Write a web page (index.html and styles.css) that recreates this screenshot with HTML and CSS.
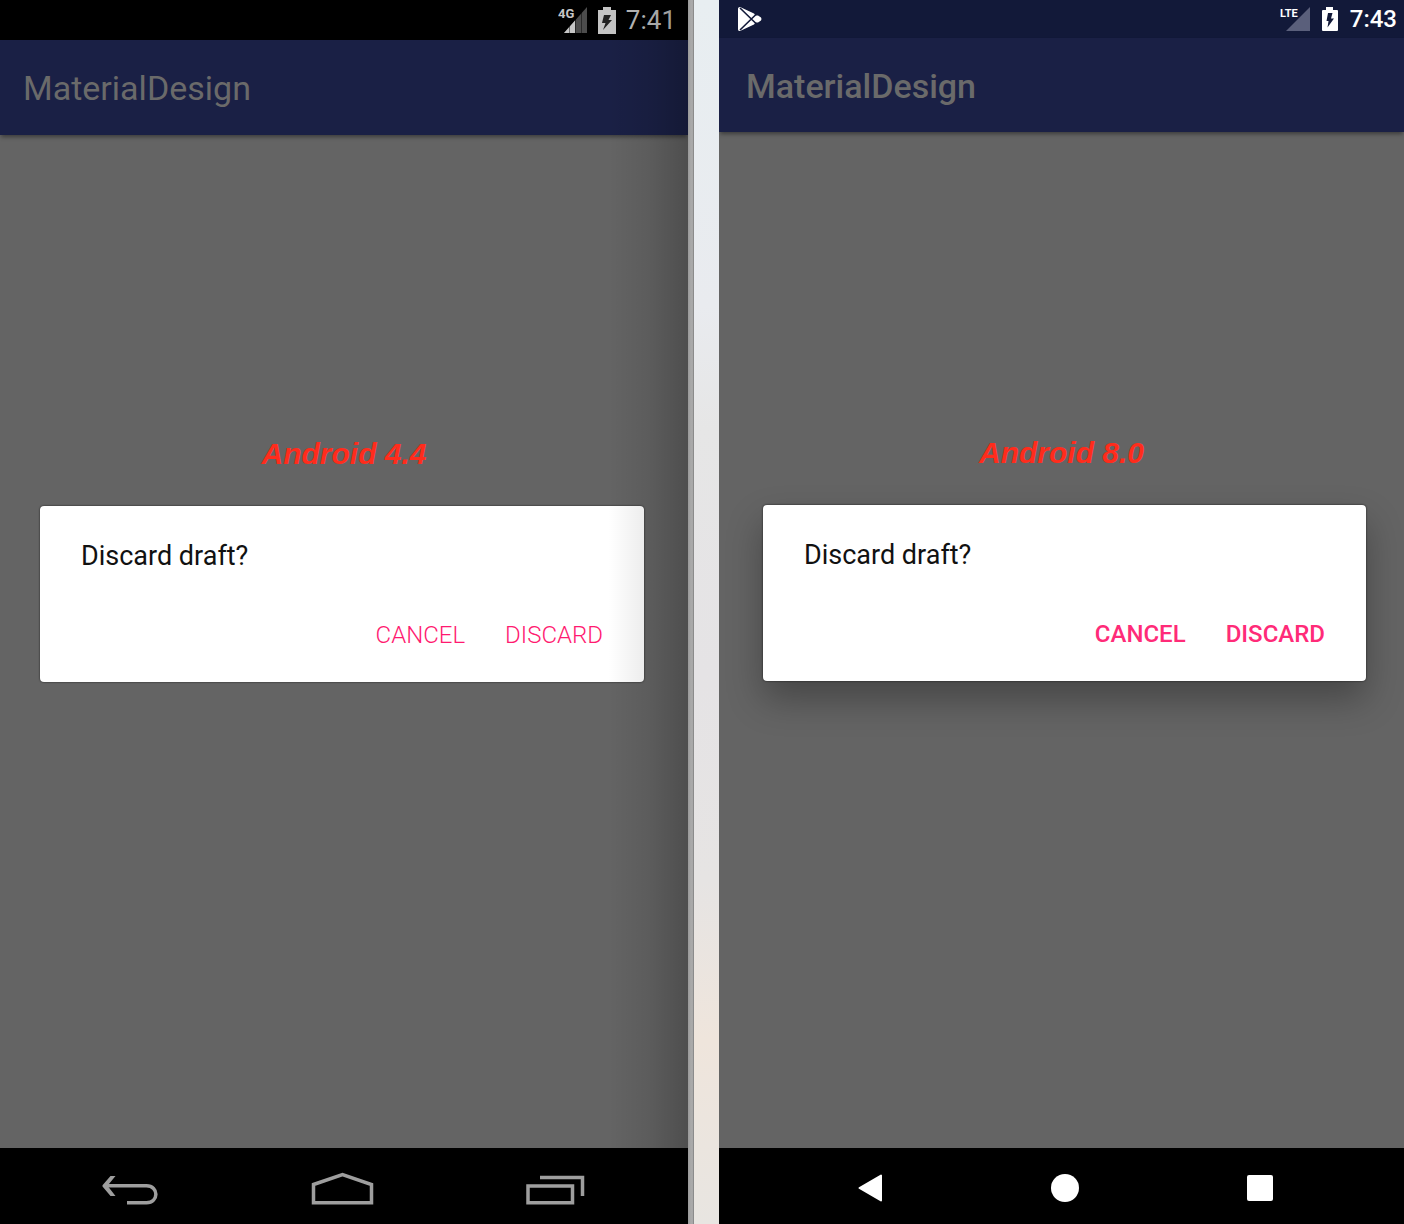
FILE: index.html
```html
<!DOCTYPE html>
<html lang="en">
<head>
<meta charset="utf-8">
<meta name="viewport" content="width=device-width, initial-scale=1">
<title>MaterialDesign</title>
<link rel="stylesheet" href="styles.css">
</head>
<body>
<main class="comparison">
  <section class="phone phone-kitkat">
    <div class="status-bar">
      <svg class="signal" width="30" height="28" viewBox="0 0 30 28" aria-label="4G signal">
        <path d="M6 27 29 1V27Z" fill="#4c4c4c"/>
        <path d="M6 27 17 14.500V27Z" fill="#c6c6c6"/>
        <path d="M11.500 19V27M17.500 12V27M23.500 6V27" stroke="#000" stroke-opacity=".45"/>
        <text class="network" x="0" y="12">4G</text>
      </svg>
      <svg class="battery" width="18" height="27" viewBox="0 0 18 27" aria-label="Battery charging">
        <path d="M5 0H13V3H18V27H0V3H5Z" fill="#c4c4c4"/>
        <path d="M6 8H13L10.500 13H14L5 23 7.500 16H4Z" fill="#222"/>
      </svg>
      <span class="clock">7:41</span>
    </div>
    <header class="app-bar"><h1 class="app-title">MaterialDesign</h1></header>
    <div class="screen">
      <p class="version">Android 4.4</p>
      <div class="dialog" role="dialog" aria-labelledby="title-kitkat">
        <h2 class="dialog-title" id="title-kitkat">Discard draft?</h2>
        <div class="actions">
          <button class="action" type="button">CANCEL</button>
          <button class="action" type="button">DISCARD</button>
        </div>
      </div>
    </div>
    <nav class="nav-bar">
      <button class="nav-button" type="button" aria-label="Back">
        <svg width="64" height="36" viewBox="0 0 64 36" fill="none" stroke="#9e9e9e" stroke-width="3.500">
          <path d="M7 15.800H48.500C61 15.800 61 32.800 48.500 32.800H29"/>
          <path d="M12.500 6H17.500L9.500 15.800 17.500 26H12.500L4.500 16.500V15.200Z" fill="#9e9e9e" stroke="none"/>
        </svg>
      </button>
      <button class="nav-button" type="button" aria-label="Home">
        <svg width="64" height="36" viewBox="0 0 64 36" fill="none" stroke="#9e9e9e" stroke-width="3.500">
          <path d="M2.500 14.500 31.500 4.500 60.500 14.500V32.800H2.500Z"/>
        </svg>
      </button>
      <button class="nav-button" type="button" aria-label="Recent apps">
        <svg width="64" height="36" viewBox="0 0 64 36" fill="none" stroke="#9e9e9e" stroke-width="3.500">
          <path d="M4 16H48.500V32.800H4Z"/>
          <path d="M16 7.500H58.500V26"/>
        </svg>
      </button>
    </nav>
  </section>
  <div class="bezel"></div>
  <div class="backdrop"></div>
  <section class="phone phone-oreo">
    <div class="status-bar">
      <svg class="play" width="24" height="24" viewBox="0 0 24 24" aria-label="Play Store">
        <path d="M0 1.500Q0 0 2 0L16 6.500 17.500 8.500H20L23 10.500Q24 12 23 13.500L20 15.500H17.500L16 17.500 2 24Q0 24 0 22.500Z" fill="#fff"/>
        <path d="M2 1 18.500 17M2 23 18.500 7" stroke="#121939" stroke-width="1.600" fill="none"/>
      </svg>
      <svg class="signal" width="30" height="26" viewBox="0 0 30 26" aria-label="LTE signal">
        <path d="M6 25 30 1V25Z" fill="#5a5f7b"/>
        <text class="network" x="0" y="11">LTE</text>
      </svg>
      <svg class="battery" width="16" height="24" viewBox="0 0 16 24" aria-label="Battery charging">
        <path d="M4 0H11V3H15Q16 3 16 4V23Q16 24 15 24H1Q0 24 0 23V4Q0 3 1 3H4Z" fill="#fff"/>
        <path d="M6 6H10.500L9 11.500H12L5.500 20.500 6.500 14H4.500Z" fill="#121939"/>
      </svg>
      <span class="clock">7:43</span>
    </div>
    <header class="app-bar"><h1 class="app-title">MaterialDesign</h1></header>
    <div class="screen">
      <p class="version">Android 8.0</p>
      <div class="dialog" role="dialog" aria-labelledby="title-oreo">
        <h2 class="dialog-title" id="title-oreo">Discard draft?</h2>
        <div class="actions">
          <button class="action" type="button">CANCEL</button>
          <button class="action" type="button">DISCARD</button>
        </div>
      </div>
    </div>
    <nav class="nav-bar">
      <button class="nav-button" type="button" aria-label="Back">
        <svg width="28" height="28" viewBox="0 0 28 28" fill="#fff">
          <path d="M25 1.500V26.500L3.500 14Z" stroke="#fff" stroke-width="2" stroke-linejoin="round"/>
        </svg>
      </button>
      <button class="nav-button" type="button" aria-label="Home">
        <svg width="28" height="28" viewBox="0 0 28 28" fill="#fff"><circle cx="14" cy="14" r="14"/></svg>
      </button>
      <button class="nav-button" type="button" aria-label="Recent apps">
        <svg width="28" height="28" viewBox="0 0 28 28" fill="#fff"><rect x="1" y="1" width="26" height="26" rx="2"/></svg>
      </button>
    </nav>
  </section>
</main>
</body>
</html>
```
FILE: styles.css
```css
* { box-sizing: border-box; }

body {
  margin: 0;
  font-family: Roboto, "Liberation Sans", sans-serif;
}

h1, h2, p { margin: 0; }

button {
  margin: 0;
  padding: 0;
  border: 0;
  background: none;
  font: inherit;
}

svg { display: block; }

.comparison {
  display: grid;
  grid-template-columns: 688fr 6px 25px 685fr;
  min-height: 100vh;
}

.phone {
  position: relative;
  display: flex;
  flex-direction: column;
  overflow: hidden;
  background: #646464;
}

.bezel {
  background: linear-gradient(90deg, #999, #aaa 50%, #a8a8a8 80%, #777);
}

.backdrop {
  background: linear-gradient(#e8eef1, #e9ebef 25%, #e6e6e6 35%, #e5e3e5 55%, #e6e4e3 72%, #efe5dc 85%, #e8e5e1);
}

.status-bar {
  display: flex;
  align-items: center;
  justify-content: flex-end;
}

.clock {
  font-size: 26px;
  line-height: 32px;
}

.app-bar {
  display: flex;
  align-items: center;
  background: #1a2045;
  box-shadow: 0 3px 4px -1px rgba(0, 0, 0, .4);
}

.app-title {
  color: #6a6a6a;
  font-size: 34px;
  line-height: 40px;
  font-weight: 400;
}

.screen {
  flex: 1;
  display: flex;
  flex-direction: column;
  justify-content: center;
  gap: 32px;
}

.version {
  color: #ff2c1c;
  font: italic 700 30px/40px "Liberation Sans", sans-serif;
  text-align: center;
}

.dialog {
  padding: 32px 41px 31px;
  border-radius: 4px;
  background: #fff;
}

.dialog-title {
  color: #111;
  font-size: 27px;
  line-height: 36px;
  font-weight: 400;
}

.actions {
  display: flex;
  justify-content: flex-end;
  gap: 40px;
  padding-top: 45px;
}

.action {
  color: #ff2b78;
  font-size: 24px;
  line-height: 32px;
}

.nav-bar {
  display: grid;
  grid-template-columns: repeat(3, 1fr);
  height: 76px;
  background: #000;
}

.nav-button {
  display: flex;
  align-items: center;
  justify-content: center;
}

.network {
  font-family: Roboto, sans-serif;
  font-weight: 700;
}

/* Android 4.4 */

.phone-kitkat::after {
  content: "";
  position: absolute;
  inset: 0 0 0 auto;
  width: 80px;
  background: linear-gradient(90deg, transparent, rgba(0, 0, 0, .08) 50%, rgba(0, 0, 0, .22));
  pointer-events: none;
}

.phone-kitkat .status-bar {
  height: 40px;
  padding-right: 12px;
  gap: 10px;
  background: #000;
}

.phone-kitkat .clock { color: #bababa; }
.phone-kitkat .network { fill: #c6c6c6; font-size: 13px; }

.phone-kitkat .app-bar { height: 95px; padding-left: 23px; }
.phone-kitkat .screen { padding-bottom: 168px; }
.phone-kitkat .dialog {
  margin: 0 44px 0 40px;
  box-shadow: 0 0 2px rgba(0, 0, 0, .8);
}
.phone-kitkat .action { color: #ff1a70; font-weight: 300; }
.phone-kitkat .nav-bar { padding: 4px 26px 0 24px; }

/* Android 8.0 */

.phone-oreo .status-bar {
  height: 38px;
  padding: 0 7px 0 19px;
  gap: 12px;
  background: #121939;
}

.phone-oreo .play { margin-right: auto; }
.phone-oreo .clock { color: #fff; font-size: 24px; font-weight: 500; }
.phone-oreo .network { fill: #fff; font-size: 11px; }

.phone-oreo .app-bar { height: 94px; padding: 2px 0 0 27px; }
.phone-oreo .app-title { font-weight: 500; }
.phone-oreo .screen { padding-bottom: 166px; }
.phone-oreo .dialog {
  margin: 0 38px 0 44px;
  box-shadow: 0 0 2px rgba(0, 0, 0, .8), 0 18px 36px rgba(0, 0, 0, .3);
}
.phone-oreo .action { font-weight: 500; }
.phone-oreo .nav-bar { padding: 3px 47px 0 53px; }
```
